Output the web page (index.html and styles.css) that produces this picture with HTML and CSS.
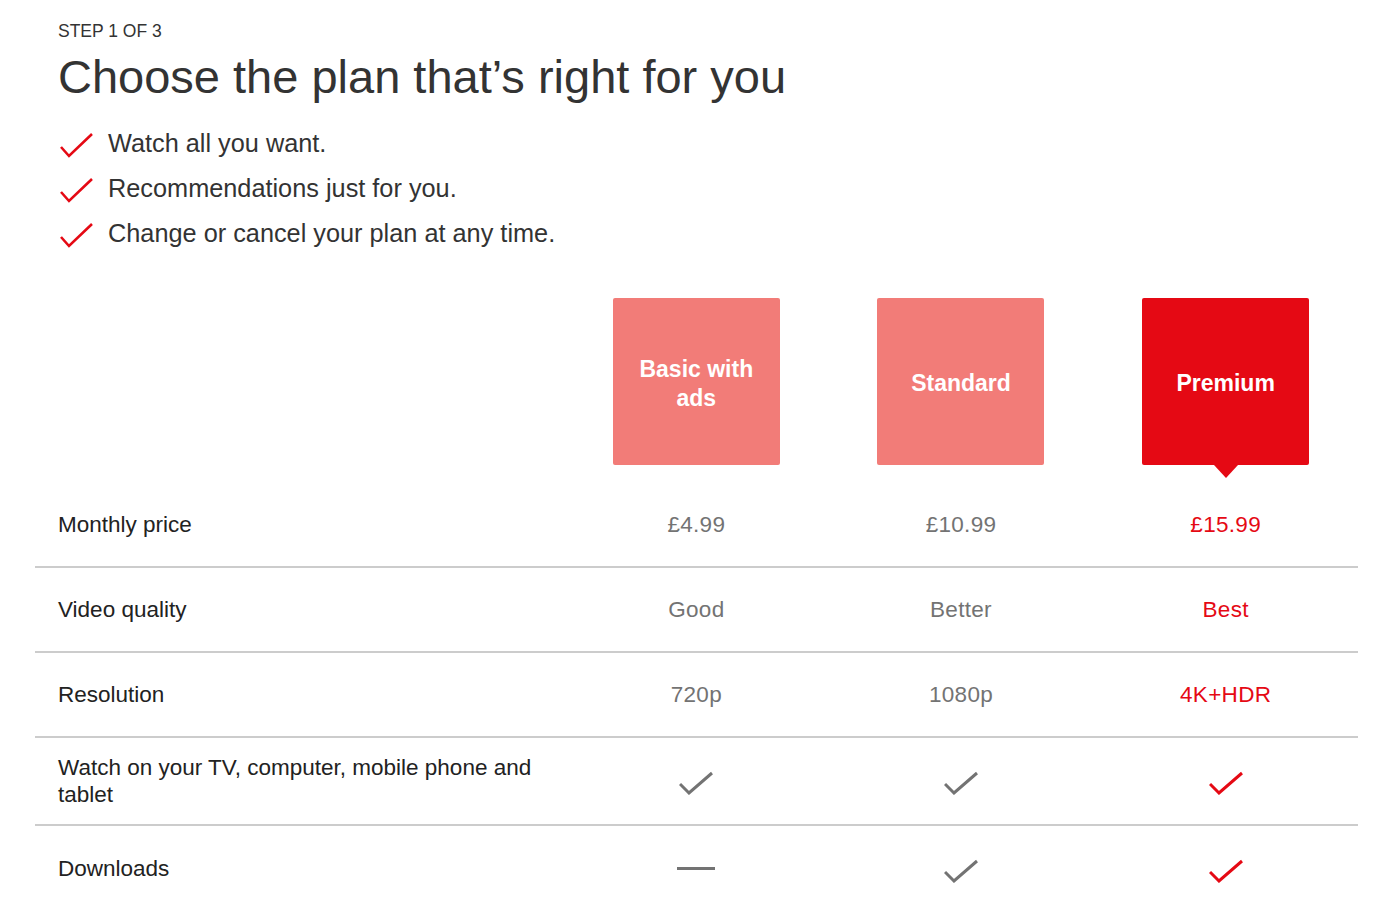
FILE: index.html
```html
<!DOCTYPE html>
<html lang="en">
<head>
<meta charset="utf-8">
<title>Choose the plan</title>
<link rel="stylesheet" href="styles.css">
</head>
<body>
<div class="page">
  <header class="intro">
    <div class="step">STEP <b>1</b> OF <b>3</b></div>
    <h1 class="title">Choose the plan that’s right for you</h1>
    <ul class="perks">
      <li><svg class="perk-icon" viewBox="0 0 34 25"><path d="M2 14 L10 23 L33 1" /></svg><span>Watch all you want.</span></li>
      <li><svg class="perk-icon" viewBox="0 0 34 25"><path d="M2 14 L10 23 L33 1" /></svg><span>Recommendations just for you.</span></li>
      <li><svg class="perk-icon" viewBox="0 0 34 25"><path d="M2 14 L10 23 L33 1" /></svg><span>Change or cancel your plan at any time.</span></li>
    </ul>
  </header>

  <div class="plans">
    <div class="plan-spacer"></div>
    <div class="plan-col"><div class="plan-box">Basic with ads</div></div>
    <div class="plan-col"><div class="plan-box">Standard</div></div>
    <div class="plan-col"><div class="plan-box selected">Premium</div></div>
  </div>

  <div class="table">
    <div class="row">
      <div class="label">Monthly price</div>
      <div class="cell">£4.99</div>
      <div class="cell">£10.99</div>
      <div class="cell active">£15.99</div>
    </div>
    <div class="row">
      <div class="label">Video quality</div>
      <div class="cell">Good</div>
      <div class="cell">Better</div>
      <div class="cell active">Best</div>
    </div>
    <div class="row">
      <div class="label">Resolution</div>
      <div class="cell">720p</div>
      <div class="cell">1080p</div>
      <div class="cell active">4K+HDR</div>
    </div>
    <div class="row tall">
      <div class="label">Watch on your TV, computer, mobile phone and tablet</div>
      <div class="cell"><svg class="tick" viewBox="0 0 34 24"><path d="M1 13 L10 22 L33 2" /></svg></div>
      <div class="cell"><svg class="tick" viewBox="0 0 34 24"><path d="M1 13 L10 22 L33 2" /></svg></div>
      <div class="cell active"><svg class="tick" viewBox="0 0 34 24"><path d="M1 13 L10 22 L33 2" /></svg></div>
    </div>
    <div class="row last">
      <div class="label">Downloads</div>
      <div class="cell"><span class="dash"></span></div>
      <div class="cell"><svg class="tick" viewBox="0 0 34 24"><path d="M1 13 L10 22 L33 2" /></svg></div>
      <div class="cell active"><svg class="tick" viewBox="0 0 34 24"><path d="M1 13 L10 22 L33 2" /></svg></div>
    </div>
  </div>
</div>
</body>
</html>
```

FILE: styles.css
```css
* { box-sizing: border-box; }

html, body {
  margin: 0;
  padding: 0;
  background: #ffffff;
  color: #222222;
  font-family: "Liberation Sans", Arial, Helvetica, sans-serif;
}

.page {
  width: 1323px;
  margin-left: 35px;
}

.intro {
  padding: 21px 23px 0 23px;
}

.step {
  font-size: 17.5px;
  line-height: 20px;
  color: #333333;
}

.step b {
  font-weight: normal;
}

.title {
  margin: 9px 0 0 0;
  font-size: 47px;
  line-height: 54px;
  font-weight: normal;
  color: #333333;
}

.perks {
  list-style: none;
  margin: 17px 0 0 0;
  padding: 0;
}

.perks li {
  display: flex;
  align-items: center;
  height: 45px;
  font-size: 25.3px;
  color: #333333;
}

.perk-icon {
  width: 34px;
  height: 25px;
  margin: 0 15px 0 1px;
  position: relative;
  top: 2px;
  flex-shrink: 0;
}

.perk-icon path {
  fill: none;
  stroke: #e50914;
  stroke-width: 2.6;
}

.plans {
  display: grid;
  grid-template-columns: 529px repeat(3, 1fr);
  margin-top: 42px;
}

.plan-col {
  display: flex;
  justify-content: center;
}

.plan-box {
  position: relative;
  width: 167px;
  height: 167px;
  border-radius: 2px;
  background: #f27c78;
  color: #ffffff;
  font-size: 23px;
  font-weight: bold;
  line-height: 29px;
  display: flex;
  align-items: center;
  justify-content: center;
  text-align: center;
  padding: 4px 20px 0 20px;
}

.plan-box.selected {
  background: #e50914;
}

.plan-box.selected::after {
  content: "";
  position: absolute;
  left: 50%;
  bottom: -13px;
  margin-left: -12px;
  border-left: 12px solid transparent;
  border-right: 12px solid transparent;
  border-top: 13px solid #e50914;
}

.table {
  margin-top: 18px;
}

.row {
  display: grid;
  grid-template-columns: 529px repeat(3, 1fr);
  align-items: center;
  height: 85px;
  border-bottom: 2px solid #cccccc;
}

.row.tall {
  height: 88px;
}

.row.last {
  border-bottom: none;
}

.label {
  padding-left: 23px;
  padding-right: 20px;
  font-size: 22.5px;
  line-height: 27px;
  color: #222222;
}

.cell {
  text-align: center;
  font-size: 22.5px;
  letter-spacing: 0.3px;
  color: #737373;
  display: flex;
  justify-content: center;
  align-items: center;
}

.cell.active {
  color: #e50914;
}

.tick {
  width: 34px;
  height: 24px;
  position: relative;
  top: 2px;
}

.tick path {
  fill: none;
  stroke: currentColor;
  stroke-width: 3;
}

.dash {
  display: block;
  width: 38px;
  height: 3px;
  background: #737373;
}
```
